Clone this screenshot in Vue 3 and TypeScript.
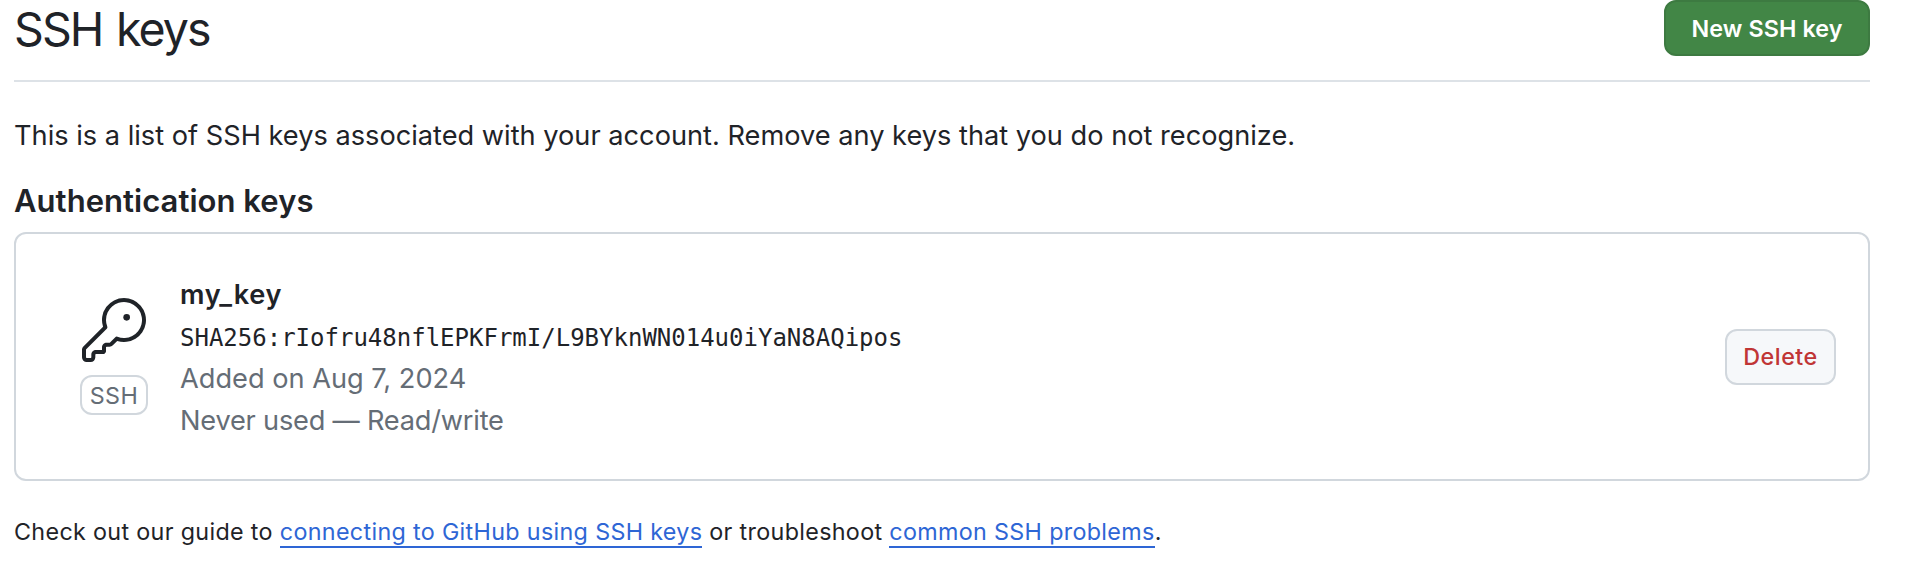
<script setup lang="ts">
interface SshKey {
  title: string
  fingerprint: string
  added: string
  usage: string
}

const keys: SshKey[] = [
  {
    title: 'my_key',
    fingerprint: 'SHA256:rIofru48nflEPKFrmI/L9BYknWN014u0iYaN8AQipos',
    added: 'Added on Aug 7, 2024',
    usage: 'Never used — Read/write',
  },
]
</script>

<template>
  <main class="page">
    <header class="head">
      <h1 class="title">SSH keys</h1>
      <button class="btn primary" type="button">New SSH key</button>
    </header>
    <p class="intro">This is a list of SSH keys associated with your account. Remove any keys that you do not recognize.</p>
    <h2 class="subtitle">Authentication keys</h2>
    <ul class="list">
      <li v-for="key in keys" :key="key.fingerprint" class="row">
        <div class="kind">
          <svg class="icon" viewBox="0 0 24 24" width="64" height="64" aria-hidden="true">
            <path d="M16.75 8.5a1.25 1.25 0 1 0 0-2.5 1.25 1.25 0 0 0 0 2.5Z" />
            <path d="M15.75 0a8.25 8.25 0 1 1-2.541 16.101l-1.636 1.636a1.744 1.744 0 0 1-1.237.513H9.25a.25.25 0 0 0-.25.25v1.448a.876.876 0 0 1-.256.619l-.214.213a.75.75 0 0 1-.545.22H5.25a.25.25 0 0 0-.25.25v1A1.75 1.75 0 0 1 3.25 24h-1.5A1.75 1.75 0 0 1 0 22.25v-2.836c0-.464.185-.908.513-1.236l7.386-7.388A8.249 8.249 0 0 1 15.75 0ZM9 8.25a6.733 6.733 0 0 0 .463 2.462.75.75 0 0 1-.168.804l-7.722 7.721a.25.25 0 0 0-.073.177v2.836c0 .138.112.25.25.25h1.5a.25.25 0 0 0 .25-.25v-1c0-.966.784-1.75 1.75-1.75H7.5v-1c0-.966.784-1.75 1.75-1.75h1.086a.25.25 0 0 0 .177-.073l1.971-1.972a.75.75 0 0 1 .804-.168A6.75 6.75 0 1 0 9 8.25Z" />
          </svg>
          <span class="badge">SSH</span>
        </div>
        <div class="details">
          <strong class="name">{{ key.title }}</strong>
          <code class="print">{{ key.fingerprint }}</code>
          <span class="muted">{{ key.added }}</span>
          <span class="muted usage">{{ key.usage }}</span>
        </div>
        <button class="btn danger" type="button">Delete</button>
      </li>
    </ul>
    <p class="foot">Check out our guide to <a class="link">connecting to GitHub using SSH keys</a> or troubleshoot <a class="link">common SSH problems</a>.</p>
  </main>
</template>

<style>
body {
  background: #fff;
}
</style>

<style scoped>
.page {
  box-sizing: border-box;
  width: 1870px;
  padding-left: 14px;
  font-family: Inter, "Liberation Sans", sans-serif;
  font-size: 27.2px;
  line-height: 42px;
  color: #1f2328;
}
.head {
  box-sizing: border-box;
  display: flex;
  justify-content: space-between;
  align-items: flex-start;
  height: 82px;
  border-bottom: 2px solid #dde2e7;
}
.title {
  margin: 0;
  font-size: 46.5px;
  font-weight: 400;
  line-height: 58px;
  letter-spacing: -1.9px;
  word-spacing: 2.2px;
}
.btn {
  box-sizing: border-box;
  height: 56px;
  padding: 0;
  border: 2px solid;
  border-radius: 12px;
  font-family: inherit;
  font-size: 23.3px;
  line-height: 52px;
  text-align: center;
}
.primary {
  width: 206px;
  padding-top: 1px;
  background: #428646;
  border-color: #3d7a41;
  color: #fff;
  font-weight: 600;
  letter-spacing: 0.1px;
}
.danger {
  width: 111px;
  margin: 0 0 2px auto;
  background: #f6f8fa;
  border-color: #d1d7dd;
  color: #c03535;
  font-weight: 500;
  letter-spacing: 0.5px;
}
.intro {
  margin: 33px 0 21px;
}
.subtitle {
  margin: 0 0 8px;
  font-size: 31px;
  font-weight: 600;
  line-height: 46px;
  letter-spacing: 0.04px;
}
.list {
  margin: 0;
  padding: 0;
  list-style: none;
  border: 2px solid #d1d7dd;
  border-radius: 12px;
}
.row {
  display: flex;
  align-items: center;
  padding: 40px 32px 37px 64px;
}
.kind {
  display: flex;
  flex-direction: column;
  align-items: center;
  align-self: flex-start;
  gap: 13px;
  width: 68px;
  margin: 24px 32px 0 0;
}
.icon {
  display: block;
  fill: #1f2328;
}
.badge {
  box-sizing: border-box;
  width: 68px;
  height: 40px;
  border: 2px solid #d1d7dd;
  border-radius: 12px;
  font-size: 23.3px;
  line-height: 37px;
  letter-spacing: 0.5px;
  text-align: center;
  color: #656d76;
}
.details {
  display: flex;
  flex-direction: column;
}
.name {
  font-weight: 600;
  letter-spacing: 0.7px;
}
.print {
  padding-top: 3px;
  font-family: "DejaVu Sans Mono", monospace;
  font-size: 24px;
  line-height: 39px;
}
.muted {
  color: #656d76;
}
.usage {
  letter-spacing: -0.21px;
}
.foot {
  margin: 33px 0 0;
  font-size: 23.3px;
  line-height: 35px;
  letter-spacing: 0.335px;
}
.link {
  border-bottom: 2px solid #2e66d5;
  color: #2e66d5;
}
</style>
